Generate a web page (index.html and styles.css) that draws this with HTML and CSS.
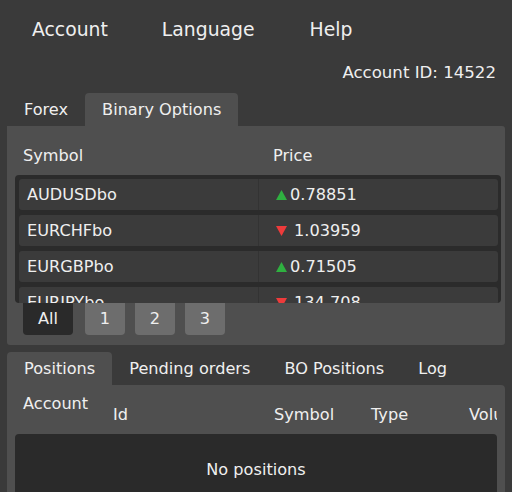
FILE: index.html
```html
<!DOCTYPE html>
<html>
<head>
<meta charset="utf-8">
<link rel="stylesheet" href="styles.css">
</head>
<body>
<nav class="menu">
  <span>Account</span>
  <span>Language</span>
  <span>Help</span>
</nav>
<div class="account-id">Account ID: 14522</div>

<div class="tabs">
  <div class="tab">Forex</div>
  <div class="tab active">Binary Options</div>
</div>
<section class="panel">
  <div class="quote-head">
    <div class="col-sym">Symbol</div>
    <div class="col-price">Price</div>
  </div>
  <div class="quotes">
    <div class="row"><div class="cell sym">AUDUSDbo</div><div class="cell price"><svg class="arrow up" width="11" height="10" viewBox="0 0 11 10"><polygon points="5.5,0 11,10 0,10" fill="#2fb040"/></svg>0.78851</div></div>
    <div class="row"><div class="cell sym">EURCHFbo</div><div class="cell price"><svg class="arrow down" width="11" height="10" viewBox="0 0 11 10"><polygon points="0,0 11,0 5.5,10" fill="#ee3b3b"/></svg>1.03959</div></div>
    <div class="row"><div class="cell sym">EURGBPbo</div><div class="cell price"><svg class="arrow up" width="11" height="10" viewBox="0 0 11 10"><polygon points="5.5,0 11,10 0,10" fill="#2fb040"/></svg>0.71505</div></div>
    <div class="row"><div class="cell sym">EURJPYbo</div><div class="cell price"><svg class="arrow down" width="11" height="10" viewBox="0 0 11 10"><polygon points="0,0 11,0 5.5,10" fill="#ee3b3b"/></svg>134.708</div></div>
  </div>
  <div class="pages">
    <div class="page all">All</div>
    <div class="page">1</div>
    <div class="page">2</div>
    <div class="page">3</div>
  </div>
</section>

<div class="tabs bottom-tabs">
  <div class="tab active">Positions</div>
  <div class="tab">Pending orders</div>
  <div class="tab">BO Positions</div>
  <div class="tab">Log</div>
</div>
<section class="panel positions">
  <div class="pos-head">
    <div class="h-account">Account</div>
    <div class="h-id">Id</div>
    <div class="h-symbol">Symbol</div>
    <div class="h-type">Type</div>
    <div class="h-volume">Volume</div>
  </div>
  <div class="empty">No positions</div>
</section>
</body>
</html>
```
FILE: styles.css
```css
html, body {
  margin: 0;
  padding: 0;
}
body {
  width: 512px;
  height: 492px;
  overflow: hidden;
  background: #3a3a3a;
  color: #efefef;
  font-family: "DejaVu Sans", Verdana, sans-serif;
  font-size: 16.15px;
}
.menu {
  display: flex;
  gap: 54px;
  padding: 16px 0 0 32px;
  font-size: 18.8px;
  line-height: 28px;
}
.menu span:nth-child(3) {
  margin-left: 1px;
}
.account-id {
  margin-top: 19px;
  text-align: right;
  padding-right: 16px;
  font-size: 16.6px;
  line-height: 20px;
}
.tabs {
  display: flex;
  margin: 10px 0 0 7px;
}
.tab {
  height: 33px;
  line-height: 33px;
  padding: 0 17px;
  border-radius: 4px 4px 0 0;
}
.tab.active {
  background: #4f4f4f;
}
.panel {
  background: #4f4f4f;
  margin: 0 7px;
  border-radius: 0 3px 3px 3px;
}
.panel:first-of-type {
  padding: 20px 0 10px 0;
}
.quote-head {
  display: flex;
  height: 20px;
  line-height: 20px;
  padding-left: 16px;
  margin-bottom: 9px;
}
.col-sym {
  width: 250px;
}
.quotes {
  margin: 0 4px 0 8px;
  height: 124px;
  padding: 4px 3px 0 4px;
  background: #2b2b2b;
  border-radius: 4px;
  overflow: hidden;
  display: flex;
  flex-direction: column;
  gap: 5px;
}
.row {
  display: flex;
  flex: none;
  height: 31px;
  line-height: 31px;
  background: #3b3b3b;
  border-radius: 3px;
}
.cell.sym {
  width: 231px;
  padding-left: 8px;
  border-right: 1px solid #333333;
}
.cell.price {
  padding-left: 17px;
}
.arrow {
  vertical-align: 0;
}
.arrow.up {
  margin-right: 3px;
}
.arrow.down {
  margin-right: 7px;
}
.pages {
  display: flex;
  padding-left: 16px;
}
.page {
  width: 40px;
  height: 32px;
  line-height: 32px;
  text-align: center;
  background: #6d6d6d;
  border-radius: 0 0 4px 4px;
  margin-right: 10px;
}
.page.all {
  width: 50px;
  background: #2a2a2a;
  margin-right: 12px;
}
.bottom-tabs {
  margin-top: 7px;
}
.panel.positions {
  height: 120px;
  border-radius: 0 4px 0 0;
}
.pos-head {
  display: flex;
  align-items: flex-start;
  height: 49px;
  margin: 0 8px;
  padding-left: 8px;
  overflow: hidden;
  line-height: 20px;
  white-space: nowrap;
}
.h-account {
  width: 90px;
  flex: none;
  margin-top: 8.5px;
}
.pos-head > div:not(.h-account) {
  margin-top: 19.5px;
  flex: none;
}
.h-id { width: 161px; }
.h-symbol { width: 97px; }
.h-type { width: 98px; }
.empty {
  margin: 0 8px;
  height: 80px;
  background: #2a2a2a;
  border-radius: 4px 4px 0 0;
  text-align: center;
  padding-top: 25.5px;
  line-height: 20px;
  box-sizing: border-box;
}
```
